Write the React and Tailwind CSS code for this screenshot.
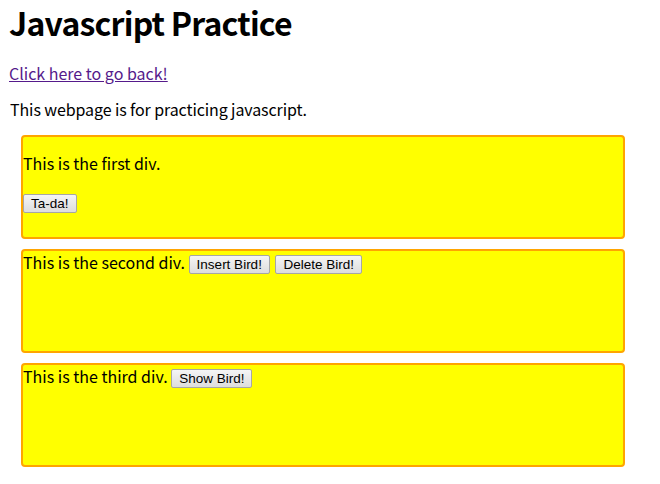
export default function App() {
  const font = { fontFamily: '"Noto Sans CJK KR", "Noto Sans", sans-serif' };
  const btn =
    "inline-block align-middle h-[19px] px-[7px] text-[13.5px] leading-[15px] text-black border border-[#a6a6a6] rounded-[2px] bg-gradient-to-b from-[#f5f5f5] to-[#dddddd] [font-family:'Liberation_Sans',Arial,sans-serif]";
  const box =
    "ml-[12px] w-[604px] h-[104px] border-2 border-[#ffa500] rounded-[4px] bg-[#ffff00] text-[16px] text-black";

  return (
    <div className="min-h-[484px] bg-white pl-[9px] pt-[2px] text-black" style={font}>
      <h1 className="mt-0 text-[32px] font-bold leading-[40px] tracking-[-0.8px] text-black">Javascript Practice</h1>

      <p className="mt-[20px] text-[16px] leading-[22px]">
        <a href="#" className="text-[#551a8b] underline">
          Click here to go back!
        </a>
      </p>

      <p className="mt-[14px] pl-[1px] text-[16px] leading-[22px] tracking-[-0.1px]">
        This webpage is for practicing javascript.
      </p>

      <div className="mt-[15px] flex flex-col gap-[10px]">
        <div className={box}>
          <p className="mt-[15px] text-[16px] leading-[22px]">This is the first div.</p>
          <p className="mt-[16px] leading-[22px]">
            <button className={btn}>Ta-da!</button>
          </p>
        </div>

        <div className={box}>
          <p className="leading-[22px]">
            This is the second div. <button className={btn}>Insert Bird!</button>{" "}
            <button className={`${btn} ml-[2px]`}>Delete Bird!</button>
          </p>
        </div>

        <div className={box}>
          <p className="leading-[22px]">
            This is the third div. <button className={btn}>Show Bird!</button>
          </p>
        </div>
      </div>
    </div>
  );
}
